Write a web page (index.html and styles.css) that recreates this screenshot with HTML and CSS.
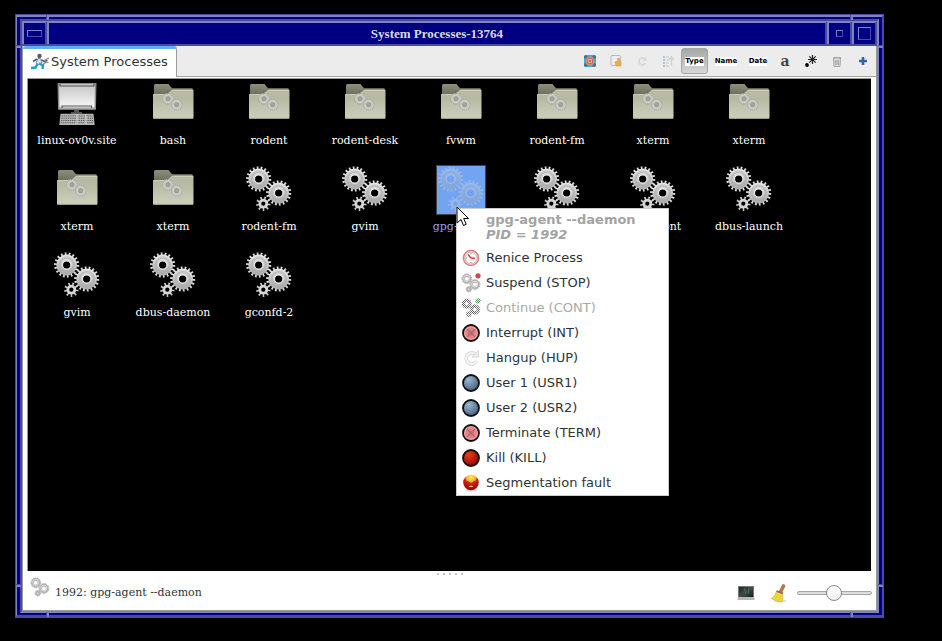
FILE: index.html
```html
<!DOCTYPE html>
<html lang="en">
<head>
<meta charset="utf-8">
<title>System Processes-13764</title>
<link rel="stylesheet" href="styles.css">
</head>
<body>
<svg class="defs" aria-hidden="true">
  <defs>
    <linearGradient id="g-metal" x1="0" y1="0" x2="0" y2="1"><stop offset="0" stop-color="#e4e4e4"/><stop offset="1" stop-color="#b0b0b0"/></linearGradient>
    <linearGradient id="g-folder" x1="0" y1="0" x2="0" y2="1"><stop offset="0" stop-color="#b9bba2"/><stop offset=".3" stop-color="#b7baa3"/><stop offset="1" stop-color="#cdd0bb"/></linearGradient>
    <linearGradient id="g-back" x1="0" y1="0" x2="0" y2="1"><stop offset="0" stop-color="#8d8f7b"/><stop offset="1" stop-color="#6c6e5c"/></linearGradient>
    <linearGradient id="g-screen" x1="0" y1="0" x2="0" y2="1"><stop offset="0" stop-color="#c4c4c4"/><stop offset=".9" stop-color="#f2f2f2"/></linearGradient>
    <linearGradient id="g-term" x1="0" y1="0" x2="1" y2="1"><stop offset="0" stop-color="#1d2828"/><stop offset=".5" stop-color="#3d4b48"/><stop offset="1" stop-color="#182020"/></linearGradient>
    <radialGradient id="g-blue" cx=".35" cy=".3" r=".75"><stop offset="0" stop-color="#9db6d0"/><stop offset="1" stop-color="#41617f"/></radialGradient>
    <radialGradient id="g-red" cx=".35" cy=".3" r=".75"><stop offset="0" stop-color="#e8401c"/><stop offset="1" stop-color="#950000"/></radialGradient>
    <radialGradient id="g-pink"><stop offset="0" stop-color="#ee5555"/><stop offset="1" stop-color="#f0b4b4"/></radialGradient>
    <radialGradient id="g-face" cx=".5" cy=".15" r=".85"><stop offset="0" stop-color="#fff04a"/><stop offset=".35" stop-color="#f2b030"/><stop offset=".5" stop-color="#d02010"/><stop offset="1" stop-color="#900"/></radialGradient>
    <pattern id="p-mesh" width="2" height="2" patternUnits="userSpaceOnUse"><path d="M0 0h1v1h-1zM1 1h1v1h-1z" fill="#fff"/></pattern>

    <symbol id="cog" viewBox="-13 -13 26 26">
      <circle r="11.2" fill="none" stroke="#dcdcdc" stroke-width="2.800" pathLength="36" stroke-dasharray=".9 1.1"/>
      <circle r="7" fill="none" stroke="url(#g-metal)" stroke-width="6.800"/>
      <circle r="7.200" fill="none" stroke="#adadad" stroke-width="2.600" opacity=".6"/>
      <circle r="4.400" fill="none" stroke="#e6e6e6" stroke-width="1"/>
    </symbol>
    <symbol id="cog-small" viewBox="-8 -8 16 16">
      <circle r="5.600" fill="none" stroke="#cfcfcf" stroke-width="3.200" pathLength="18" stroke-dasharray=".8 1.2"/>
      <circle r="3.500" fill="none" stroke="#d6d6d6" stroke-width="2.800"/>
    </symbol>
    <symbol id="cog-flat" viewBox="-6 -6 12 12">
      <circle r="4.900" fill="none" stroke="#a9aaa2" stroke-width="1.600" pathLength="32" stroke-dasharray="1 1"/>
      <circle r="3.300" fill="#b9baae" stroke="#c9c9c6" stroke-width="2.400"/>
      <circle r="1.900" fill="#a5a798" stroke="#8f9087" stroke-width=".7"/>
    </symbol>
    <symbol id="gears" viewBox="0 0 48 48">
      <use href="#cog" x="1.700" y="1" width="26" height="26"/>
      <use href="#cog" x="21.700" y="15" width="26" height="26"/>
      <use href="#cog-small" x="11.300" y="30.700" width="16" height="16"/>
    </symbol>
    <symbol id="mini-gears" viewBox="0 0 20 20">
      <g fill="none" stroke="#8e8e8e" stroke-width="1" stroke-dasharray="1 1"><circle cx="5.800" cy="5.800" r="4.900"/><circle cx="14" cy="11.500" r="4.900"/><circle cx="7.800" cy="16.200" r="2.700"/></g>
      <g fill="none" stroke="#b4b4b4"><circle cx="5.800" cy="5.800" r="3.300" stroke-width="2.800"/><circle cx="14" cy="11.500" r="3.300" stroke-width="2.800"/><circle cx="7.800" cy="16.200" r="1.600" stroke-width="2"/></g>
      <g fill="none" stroke="#e0e0e0" stroke-width=".9"><circle cx="5.600" cy="5.400" r="3"/><circle cx="13.800" cy="11.100" r="3"/></g>
    </symbol>
    <symbol id="folder" viewBox="0 0 48 48">
      <path d="M6 16V6.500q0-1.500 1.500-1.500H20.500l3.500 4.200H44.500V16z" fill="url(#g-back)"/>
      <path d="M5 15.600q0-.6.7-.6H19.500l4.500-4q.4-.4 1-.4H44.800q.7 0 .7.700V38.500q0 1.300-1.300 1.300H6.300Q5 39.800 5 38.500z" fill="url(#g-folder)"/>
      <path d="M5.500 15.500H19.700l4.500-4H45" fill="none" stroke="#cfd1bd" stroke-width=".8"/>
      <path d="M5.500 39.400H45" stroke="#9da08a" stroke-width=".9"/>
      <use href="#cog-flat" x="13.500" y="13.200" width="13" height="13"/>
      <use href="#cog-flat" x="22.200" y="19.200" width="13" height="13"/>
      <circle cx="22" cy="31" r="2" fill="none" stroke="#c4c5bf" stroke-width="1.800"/>
    </symbol>
    <symbol id="computer" viewBox="0 0 48 48">
      <path d="M5.500 4H44.500l-.6 26.500H6.100z" fill="#8c8c8c"/>
      <path d="M7 5H43l-.5 23.500H7.500z" fill="url(#g-screen)"/>
      <path d="M8 4.800v2.200H42V4.800M10 29.500v-2.500H39.500v2.500" fill="none" stroke="#555" stroke-width="1.200"/>
      <path d="M6.500 29.700H43.500" stroke="#aaa" stroke-width="1.600"/>
      <path d="M22 31h5v2h3v1.800H19V33h3z" fill="#555"/>
      <path d="M8.500 34.800H41.500l1.200 11.200H7.300z" fill="#b5b5b5"/>
      <path d="M9.500 37H40.500M9.200 39.300H41M9 41.500H41.200M8.700 43.700H41.500" stroke="#5d5d5d" stroke-width="1" stroke-dasharray="1.400 .8"/>
      <path d="M25 35v10M34 35v10" stroke="#ddd"/><path d="M34 36.500h3" stroke="#2ecc40" stroke-width="1.200"/>
    </symbol>
    <symbol id="stopball" viewBox="0 0 20 20">
      <circle cx="10" cy="10" r="8" fill="url(#g-pink)" stroke="#111" stroke-width="1.800"/>
      <path d="M6 6l8 8M14 6l-8 8" stroke="#8a7480" stroke-width="1.200"/><circle cx="10" cy="10" r="5" fill="none" stroke="#e55" opacity=".4"/>
    </symbol>
    <symbol id="blueball" viewBox="0 0 20 20"><circle cx="10" cy="10" r="8" fill="url(#g-blue)" stroke="#111" stroke-width="1.800"/></symbol>
  </defs>
</svg>

<div class="window">
  <i class="notch top start"></i><i class="notch top end"></i>
  <i class="notch bottom start"></i><i class="notch bottom end"></i>
  <i class="notch left upper"></i><i class="notch left lower"></i>
  <i class="notch right upper"></i><i class="notch right lower"></i>
  <div class="bevel">
    <header class="titlebar">
      <button class="wm" aria-label="Window menu"><span class="mark wide"></span></button>
      <h1>System Processes-13764</h1>
      <button class="wm" aria-label="Minimize"><span class="mark small"></span></button>
      <button class="wm" aria-label="Maximize"><span class="mark big"></span></button>
    </header>

    <main class="client">
      <div class="tabs">
        <button class="tab">
          <svg width="20" height="18" viewBox="0 0 20 18" aria-hidden="true">
            <circle cx="9.500" cy="3" r="2.200" fill="#555b66"/>
            <path d="M8 5.500l3 .5 1 4-3.500 1.500L6 10z" fill="#dfe6ee" stroke="#5a6878" stroke-width=".8"/>
            <path d="M3 8.500L7 6M11.500 7l3 1.500 3-1" stroke="#435a78" stroke-width="1.500" fill="none"/>
            <path d="M9 10.500l4 2-.5 3.500M7.500 11l-2 3.500L1 15" stroke="#249cc0" stroke-width="2.400" fill="none"/>
            <path d="M13 8l6-3M13.500 10l5-.5M13 12l3-3.500" stroke="#888" stroke-width="1.200"/>
          </svg>
          <span>System Processes</span>
        </button>
        <div class="tools">
          <button aria-label="Rodent"><svg width="14" height="14" viewBox="0 0 14 14"><rect x="1" y="1" width="12" height="12" rx="2" fill="#35aede"/><path d="M1 2l2-1 2 2-2 2-2-1zM13 2l-2-1-2 2 2 2 2-1zM1 12l2 1 2-2-2-2-2 1zM13 12l-2 1-2-2 2-2 2 1z" fill="#4d6d9b"/><circle cx="7" cy="7" r="4.500" fill="#e88d5e"/><circle cx="7" cy="7" r="2.800" fill="#c7d3a4" stroke="#c55a55"/><circle cx="7" cy="7" r="1.200" fill="#d55"/></svg></button>
          <button aria-label="Bookmark"><svg width="14" height="14" viewBox="0 0 14 14"><rect x="2" y="1.500" width="9.500" height="10" rx="1" fill="#eee" stroke="#b9b9b9"/><path d="M6 8l2-.5 1-3.500 1.500.5V7l1.500.5V12H7z" fill="#f0ab4a" stroke="#d79a52" stroke-width=".6"/></svg></button>
          <button aria-label="Reload"><svg width="14" height="14" viewBox="0 0 14 14"><path d="M10 5A3.500 3.500 0 1 0 10.500 9" fill="none" stroke="#d6d6d6" stroke-width="1.800"/><path d="M11.500 2.500v4.500H7z" fill="#dcdcdc"/></svg></button>
          <button aria-label="Sort"><svg width="14" height="14" viewBox="0 0 14 14"><path d="M2 3h2M2 6h2M2 9h2M2 12h2" stroke="#9fb7d8" stroke-width="1.500"/><path d="M5 3h3M5 6h3M5 9h3M5 12h3" stroke="#c8c8c8"/><path d="M10.500 12V4M8 6l2.500-3L13 6" fill="none" stroke="#d2d2d2" stroke-width="1.500"/></svg></button>
          <button class="on"><span>Type</span></button>
          <button class="name"><span>Name</span></button>
          <button class="date"><span>Date</span></button>
          <button class="letter">a</button>
          <button aria-label="Select pattern"><svg width="14" height="14" viewBox="0 0 14 14"><circle cx="3" cy="11" r="1.900"/><path d="M8.500 1v9M4 5.500h9M5.300 2.300l6.400 6.400M11.700 2.300L5.300 8.700" stroke="#222" stroke-width="1.200"/></svg></button>
          <button aria-label="Trash"><svg width="14" height="14" viewBox="0 0 14 14"><path d="M3.500 4h7l-.5 8.500H4z" fill="#ddd" stroke="#a4a8a4"/><path d="M3 3.500h8M5.500 6v5M7 6v5M8.500 6v5" stroke="#a4a8a4"/></svg></button>
          <button aria-label="Add"><svg width="14" height="14" viewBox="0 0 14 14"><path d="M7 3v8M3 7h8" stroke="#3464a4" stroke-width="2.600"/></svg></button>
        </div>
      </div>

      <section class="canvas">
        <ul class="icons">
          <li><svg><use href="#computer"/></svg><span>linux-ov0v.site</span></li>
          <li><svg><use href="#folder"/></svg><span>bash</span></li>
          <li><svg><use href="#folder"/></svg><span>rodent</span></li>
          <li><svg><use href="#folder"/></svg><span>rodent-desk</span></li>
          <li><svg><use href="#folder"/></svg><span>fvwm</span></li>
          <li><svg><use href="#folder"/></svg><span>rodent-fm</span></li>
          <li><svg><use href="#folder"/></svg><span>xterm</span></li>
          <li><svg><use href="#folder"/></svg><span>xterm</span></li>
          <li><svg><use href="#folder"/></svg><span>xterm</span></li>
          <li><svg><use href="#folder"/></svg><span>xterm</span></li>
          <li><svg><use href="#gears"/></svg><span>rodent-fm</span></li>
          <li><svg><use href="#gears"/></svg><span>gvim</span></li>
          <li class="selected"><svg><use href="#gears"/></svg><span>gpg-agent</span></li>
          <li><svg><use href="#gears"/></svg></li>
          <li><svg><use href="#gears"/></svg><span>gpg-agent</span></li>
          <li><svg><use href="#gears"/></svg><span>dbus-launch</span></li>
          <li><svg><use href="#gears"/></svg><span>gvim</span></li>
          <li><svg><use href="#gears"/></svg><span>dbus-daemon</span></li>
          <li><svg><use href="#gears"/></svg><span>gconfd-2</span></li>
        </ul>

        <div class="menu">
          <p class="menu-head">gpg-agent --daemon<br><em>PID = 1992</em></p>
          <button><svg viewBox="0 0 20 20"><circle cx="10" cy="10" r="7.500" fill="#f5f3f1" stroke="#dd7d7d" stroke-width="1.600"/><circle cx="10" cy="10" r="6" fill="none" stroke="#bbb" stroke-width="1"/><path d="M10 10L7 6.500M10 10l4 .5" stroke="#c44" stroke-width="1.500"/><path d="M10 5v1M10 14v1M5 10h1" stroke="#888"/></svg>Renice Process</button>
          <button><svg viewBox="0 0 20 20"><use href="#mini-gears"/><circle cx="17" cy="2.800" r="2.600" fill="#cf4747"/></svg>Suspend (STOP)</button>
          <button disabled><svg viewBox="0 0 20 20"><use href="#mini-gears"/><g fill="none" stroke="#666" stroke-width="3"><circle cx="5.800" cy="5.800" r="3.300"/><circle cx="14" cy="11.500" r="3.300"/><circle cx="7.800" cy="16.200" r="1.600" stroke-width="2"/></g><circle cx="17" cy="2.800" r="2.600" fill="#3f8f4d"/><rect width="20" height="20" fill="url(#p-mesh)"/></svg>Continue (CONT)</button>
          <button><svg viewBox="0 0 20 20"><use href="#stopball"/></svg>Interrupt (INT)</button>
          <button><svg viewBox="0 0 20 20"><path d="M14.500 6.500A5.500 5.500 0 1 0 15.500 13" fill="none" stroke="#d2d2d2" stroke-width="3.600"/><path d="M14.500 6.500A5.500 5.500 0 1 0 15.500 13" fill="none" stroke="#f2f2f2" stroke-width="2.200"/><path d="M17.500 2.500V9H11z" fill="#ededed" stroke="#d2d2d2" stroke-width=".8"/></svg>Hangup (HUP)</button>
          <button><svg viewBox="0 0 20 20"><use href="#blueball"/></svg>User 1 (USR1)</button>
          <button><svg viewBox="0 0 20 20"><use href="#blueball"/></svg>User 2 (USR2)</button>
          <button><svg viewBox="0 0 20 20"><use href="#stopball"/></svg>Terminate (TERM)</button>
          <button><svg viewBox="0 0 20 20"><circle cx="10" cy="10" r="8" fill="url(#g-red)" stroke="#111" stroke-width="1.800"/></svg>Kill (KILL)</button>
          <button><svg viewBox="0 0 20 20"><ellipse cx="10" cy="17.500" rx="6" ry="1.300" fill="#ddd"/><circle cx="10" cy="9.500" r="7.800" fill="url(#g-face)"/><path d="M6 8.500l2.500 1.200M14 8.500l-2.500 1.200" stroke="#822" stroke-width="1"/><path d="M7.500 13.800q2.500-2 5 0z" fill="#fff"/></svg>Segmentation fault</button>
        </div>
        <svg class="pointer" viewBox="0 0 14 21"><path d="M1 1v16l4-3.500L7.500 19.500l2.700-1.200L7.700 12.500H12.500z" fill="#fff" stroke="#000"/></svg>
      </section>

      <div class="grip"><i></i><i></i><i></i><i></i><i></i></div>
      <footer class="status">
        <svg class="s-gears"><use href="#mini-gears"/></svg>
        <output>1992: gpg-agent --daemon</output>
        <button class="term" aria-label="Terminal"><svg width="18" height="16" viewBox="0 0 18 16"><path d="M1 1h16v11.500H1z" fill="#777"/><path d="M2 2h14v10H2z" fill="url(#g-term)"/><path d="M7 3l2 6M12 3l-1 5" stroke="#52635c"/><path d="M.5 12.500h17V15H.5z" fill="#b5b5b8"/></svg></button>
        <button class="broom" aria-label="Clear"><svg width="18" height="20" viewBox="0 0 18 20"><ellipse cx="10" cy="18" rx="7" ry="1.500" fill="#e4e4e4"/><path d="M10.500 9l3-6" stroke="#b97a40" stroke-width="3.600" stroke-linecap="round"/><path d="M6.500 8.500l6 2q.8 4-.5 8.500Q6 18.500 1.500 15.500 5.500 13 6.500 8.500z" fill="#f0dc3c" stroke="#c9ae20" stroke-width=".7"/><path d="M6.500 8l6.500 2.300" stroke="#a05a7a" stroke-width="1.800"/><path d="M8 11.500L5 16.500M10.500 12l-2 6" stroke="#d9c02c" stroke-width=".7"/></svg></button>
        <input type="range" min="0" max="100" value="49" aria-label="Icon size">
      </footer>
    </main>
  </div>
</div>
</body>
</html>
```
FILE: styles.css
```css
:root {
  --navy: #000080;
  --mid: #4a4aa4;
  --light: #8282be;
  --serif: "DejaVu Serif", serif;
}
* { box-sizing: border-box; }
body {
  margin: 0;
  padding: 14px 58px 23px 15px;
  min-height: 100vh;
  display: flex;
  background: #000;
  font-family: "DejaVu Sans", sans-serif;
  font-size: 13px;
  color: #2e3436;
}
button {
  border: 0;
  padding: 0;
  background: none;
  font: inherit;
  color: inherit;
}
.defs { position: absolute; width: 0; height: 0; }

.window {
  position: relative;
  flex: 1;
  display: flex;
  border: 1px solid var(--mid);
  background: var(--navy);
}
.window::before {
  content: "";
  position: absolute;
  inset: 0;
  border: 2px solid;
  border-color: var(--light) var(--mid) var(--mid) var(--light);
  border-left-width: 1px;
  border-right-width: 1px;
}
.bevel {
  flex: 1;
  display: flex;
  flex-direction: column;
  min-width: 0;
  margin: 4px;
  border: 2px solid;
  border-color: var(--mid) var(--light) var(--light) var(--mid);
}
.notch {
  position: absolute;
  z-index: 1;
  background: var(--light);
  border: 0 solid var(--mid);
}
.notch.top, .notch.bottom { width: 3px; height: 5px; border-left-width: 1px; }
.notch.left, .notch.right { width: 5px; height: 3px; border-top-width: 1px; }
.notch.top { top: 0; }
.notch.bottom { bottom: 0; }
.notch.left { left: 0; }
.notch.right { right: 0; }
.notch.start { left: 30px; }
.notch.end { right: 30px; }
.notch.upper { top: 30px; }
.notch.lower { bottom: 30px; }

.titlebar {
  display: flex;
  height: 25px;
  border-bottom: 2px solid var(--mid);
}
.titlebar h1, .wm {
  border: 2px solid;
  border-color: var(--light) var(--mid) transparent var(--light);
  border-bottom: 0;
}
.titlebar h1 {
  flex: 1;
  margin: 0;
  font: bold 13px/21px "Liberation Serif", serif;
  color: #dcdcdc;
  text-align: center;
}
.wm {
  width: 25px;
  display: flex;
  align-items: center;
  justify-content: center;
}
.mark {
  border: 1px solid;
  border-color: var(--light) var(--mid) var(--mid) var(--light);
}
.mark.wide { width: 15px; height: 7px; }
.mark.small { width: 7px; height: 7px; }
.mark.big { width: 13px; height: 13px; }

.client {
  flex: 1;
  display: flex;
  flex-direction: column;
  background: #fff;
  border: 1px solid #999;
  border-top: 0;
}
.tabs {
  display: flex;
  height: 31px;
  background: #ececec;
}
.tab {
  display: flex;
  align-items: center;
  gap: 1px;
  padding: 0 8px 3px 7px;
  background: #fff;
  border-top: 3px solid #62aef0;
  border-right: 1px solid #9a9e9a;
  border-radius: 3px 3px 0 0;
}
.tools {
  flex: 1;
  display: flex;
  justify-content: flex-end;
  align-items: center;
  border-bottom: 1px solid #a3a7a3;
}
.tools button {
  width: 26px;
  height: 26px;
  display: flex;
  align-items: center;
  justify-content: center;
  font: bold 7px/9px "DejaVu Sans", sans-serif;
  color: #000;
}
.tools span { background: #fff; }
.tools .on {
  width: 27px;
  border: 1px solid #a5a5a5;
  border-radius: 3px;
  background: linear-gradient(#a4a8a4, #d6d6d6);
}
.tools .name { width: 36px; }
.tools .date { width: 28px; }
.tools .letter { font: bold 14px/20px "DejaVu Serif", serif; color: #444; }

.canvas {
  position: relative;
  flex: 1;
  margin: 1px 5px 0 4px;
  background: #000;
  border-top: 1px solid #999;
  border-left: 1px solid #999;
}
.icons {
  list-style: none;
  margin: 0;
  padding: 0 0 0 1px;
  display: grid;
  grid-template-columns: repeat(auto-fill, 96px);
  grid-auto-rows: 86px;
}
.icons li {
  display: flex;
  flex-direction: column;
  align-items: center;
  font: 11px/14px var(--serif);
  color: #fff;
}
.icons svg {
  width: 50px;
  height: 50px;
  padding: 0 2px 2px 0;
  margin-bottom: 5px;
}
.selected svg {
  outline: 1px solid #444;
  outline-offset: -1px;
  background: #72a4f2;
}
.selected use { opacity: .35; }
.icons .selected { color: #9c9cf4; }

.menu {
  position: absolute;
  left: 428px;
  top: 129px;
  width: 213px;
  background: #fff;
  border: 1px solid #ccc;
}
.menu-head {
  margin: 0;
  padding: 3px 0 3px 29px;
  font-weight: bold;
  line-height: 15px;
  color: #a3a3a3;
}
.menu button {
  display: flex;
  align-items: center;
  gap: 5px;
  width: 100%;
  height: 25px;
  padding-left: 4px;
}
.menu button:disabled { color: #a9a9a9; }
.menu svg { width: 20px; height: 20px; }
.pointer {
  position: absolute;
  left: 428px;
  top: 127px;
  width: 14px;
  height: 21px;
}

.grip {
  display: flex;
  justify-content: center;
  gap: 4px;
  padding-top: 2px;
}
.grip i { width: 2px; height: 2px; background: #c4c4c4; }
.status {
  display: flex;
  align-items: center;
  height: 35px;
  padding: 0 4px 0 7px;
  font: 11px/14px var(--serif);
}
.s-gears { width: 20px; height: 20px; margin: 0 5px 12px 0; }
.status output { flex: 1; }
.status svg { display: block; }
.term { margin-right: 15px; }
.broom { margin-right: 9px; }
input[type="range"] {
  appearance: none;
  width: 75px;
  height: 18px;
  margin: 0;
  background: none;
}
input[type="range"]::-webkit-slider-runnable-track {
  height: 4px;
  background: #dcdcdc;
  border: 1px solid #a6a6a6;
  border-radius: 2px;
}
input[type="range"]::-webkit-slider-thumb {
  appearance: none;
  width: 16px;
  height: 16px;
  margin-top: -7px;
  background: linear-gradient(#fff, #f0f0f0);
  border: 1px solid #888;
  border-radius: 50%;
}
```
